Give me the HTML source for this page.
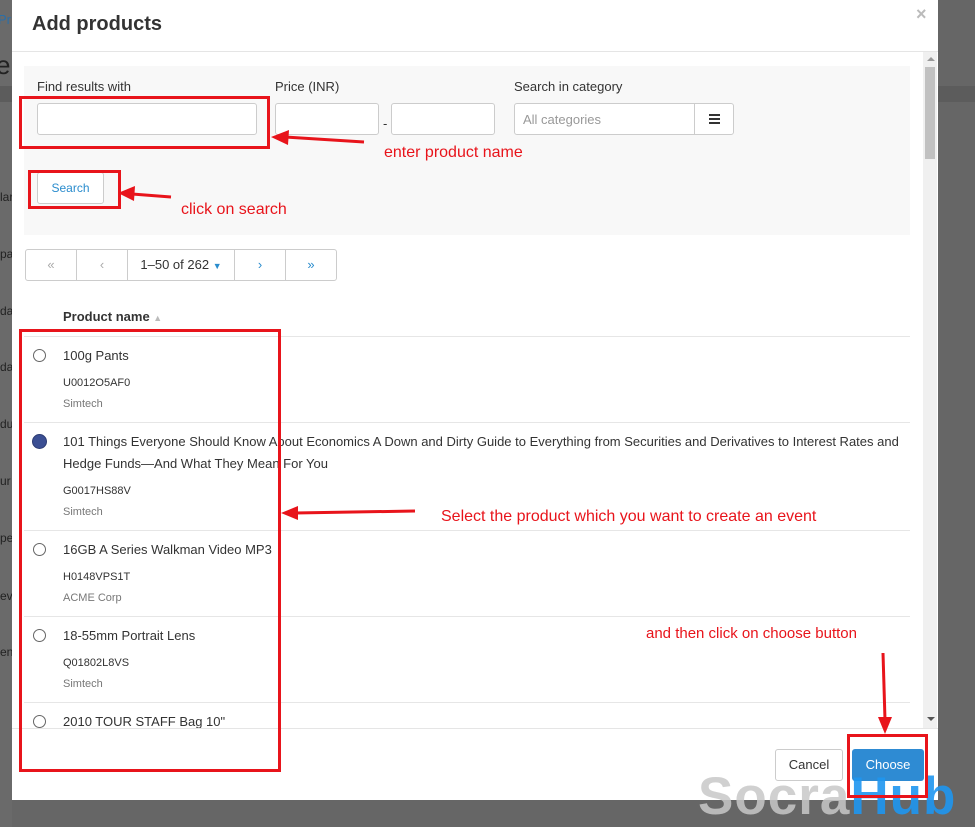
<!DOCTYPE html>
<html><head><meta charset="utf-8"><style>
*{box-sizing:border-box;margin:0;padding:0}
body{width:975px;height:827px;overflow:hidden;background:#666;font-family:"Liberation Sans",sans-serif;position:relative;color:#333}
.a{position:absolute}
.inp{position:absolute;background:#fff;border:1px solid #ccc;border-radius:3px}
.lbl{position:absolute;font-size:13px;color:#333}
.red{position:absolute;border:3px solid #e8141b}
.rt{position:absolute;color:#e8141b;font-size:16px}
.pg{position:absolute;top:249px;height:32px;border:1px solid #ccc;background:#fff;font-size:13px;text-align:center;line-height:30px;color:#2a8ccd}
.row{position:absolute;left:24px;width:886px;border-top:1px solid #e6e6e6}
.nm{position:absolute;left:39px;font-size:13px;color:#333;line-height:22px}
.sku{position:absolute;left:39px;font-size:11px;color:#333}
.co{position:absolute;left:39px;font-size:11px;color:#777}
.rad{position:absolute;left:9px;width:13px;height:13px;border:1px solid #666;border-radius:50%;background:#fff}
</style></head><body>
<div class="a" style="left:0;top:0;width:12px;height:827px;background:#6a6a6a"></div>
<div class="a" style="left:-2px;top:12px;font-size:13px;color:#2a6fa8">Pr</div>
<div class="a" style="left:-4px;top:50px;font-size:26px;color:#222">e</div>
<div class="a" style="left:0;top:86px;width:12px;height:16px;background:#5c5c5c"></div>
<div class="a" style="left:0;top:190px;font-size:12px;color:#222">lar</div>
<div class="a" style="left:0;top:247px;font-size:12px;color:#222">pan</div>
<div class="a" style="left:0;top:304px;font-size:12px;color:#222">da</div>
<div class="a" style="left:0;top:360px;font-size:12px;color:#222">da</div>
<div class="a" style="left:0;top:417px;font-size:12px;color:#222">du</div>
<div class="a" style="left:0;top:474px;font-size:12px;color:#222">ur</div>
<div class="a" style="left:0;top:531px;font-size:12px;color:#222">pe</div>
<div class="a" style="left:0;top:589px;font-size:12px;color:#222">eve</div>
<div class="a" style="left:0;top:645px;font-size:12px;color:#222">en</div>
<div class="a" style="left:938px;top:86px;width:37px;height:16px;background:#5c5c5c"></div>

<div class="a" style="left:12px;top:0;width:926px;height:800px;background:#fff">
 <div class="a" style="left:20px;top:13px;font-size:20px;font-weight:bold;color:#333">Add products</div>
 <div class="a" style="left:904px;top:4px;font-size:18px;color:#bbb;font-weight:bold">×</div>
 <div class="a" style="left:0;top:51px;width:926px;height:1px;background:#e5e5e5"></div>
 <div class="a" style="left:911px;top:52px;width:14px;height:676px;background:#f0f0f0"></div>
 <div class="a" style="left:913px;top:67px;width:10px;height:92px;background:#c1c1c1"></div>
 <div class="a" style="left:915px;top:57px;width:0;height:0;border-left:4px solid transparent;border-right:4px solid transparent;border-bottom:4px solid #999"></div>
 <div class="a" style="left:915px;top:717px;width:0;height:0;border-left:4px solid transparent;border-right:4px solid transparent;border-top:4px solid #555"></div>
 <div class="a" style="left:12px;top:66px;width:886px;height:169px;background:#f8f8f8"></div>
 <div class="a" style="left:0;top:728px;width:926px;height:1px;background:#e5e5e5"></div>
</div>

<div class="lbl" style="left:37px;top:79px">Find results with</div>
<div class="lbl" style="left:275px;top:79px">Price (INR)</div>
<div class="lbl" style="left:514px;top:79px">Search in category</div>
<div class="inp" style="left:37px;top:103px;width:220px;height:32px"></div>
<div class="inp" style="left:275px;top:103px;width:104px;height:32px"></div>
<div class="a" style="left:383px;top:116px;font-size:13px">-</div>
<div class="inp" style="left:391px;top:103px;width:104px;height:32px"></div>
<div class="inp" style="left:514px;top:103px;width:181px;height:32px;border-radius:3px 0 0 3px;font-size:13px;color:#999;padding:8px"> All categories</div>
<div class="inp" style="left:694px;top:103px;width:40px;height:32px;border-radius:0 3px 3px 0">
 <div class="a" style="left:14px;top:10px;width:11px;height:2px;background:#333;box-shadow:0 4px 0 #333,0 8px 0 #333"></div></div>
<div class="inp" style="left:37px;top:172px;width:67px;height:32px;font-size:12px;color:#2a8ccd;text-align:center;line-height:30px">Search</div>

<div class="pg" style="left:25px;width:52px;border-radius:3px 0 0 3px;color:#aaa">«</div>
<div class="pg" style="left:76px;width:52px;color:#aaa">‹</div>
<div class="pg" style="left:127px;width:108px;color:#333">1–50 of 262 <span style="color:#2a8ccd;font-size:9px">▼</span></div>
<div class="pg" style="left:234px;width:52px">›</div>
<div class="pg" style="left:285px;width:52px;border-radius:0 3px 3px 0">»</div>

<div class="a" style="left:63px;top:309px;font-size:13px;font-weight:bold">Product name <span style="color:#bbb;font-size:9px">▲</span></div>

<div class="row" style="top:336px;height:86px">
 <div class="rad" style="top:12px"></div>
 <div class="nm" style="top:8px">100g Pants</div>
 <div class="sku" style="top:40px">U0012O5AF0</div>
 <div class="co" style="top:61px">Simtech</div>
</div>
<div class="row" style="top:422px;height:108px">
 <div class="rad" style="top:11px;width:15px;height:15px;left:8px;background:#3b4f93;border-color:#2d3c73"></div>
 <div class="nm" style="top:8px;width:850px">101 Things Everyone Should Know About Economics A Down and Dirty Guide to Everything from Securities and Derivatives to Interest Rates and Hedge Funds—And What They Mean For You</div>
 <div class="sku" style="top:62px">G0017HS88V</div>
 <div class="co" style="top:83px">Simtech</div>
</div>
<div class="row" style="top:530px;height:86px">
 <div class="rad" style="top:12px"></div>
 <div class="nm" style="top:8px">16GB A Series Walkman Video MP3</div>
 <div class="sku" style="top:40px">H0148VPS1T</div>
 <div class="co" style="top:61px">ACME Corp</div>
</div>
<div class="row" style="top:616px;height:86px">
 <div class="rad" style="top:12px"></div>
 <div class="nm" style="top:8px">18-55mm Portrait Lens</div>
 <div class="sku" style="top:40px">Q01802L8VS</div>
 <div class="co" style="top:61px">Simtech</div>
</div>
<div class="row" style="top:702px;height:26px;overflow:hidden">
 <div class="rad" style="top:12px"></div>
 <div class="nm" style="top:8px">2010 TOUR STAFF Bag 10"</div>
</div>

<div class="inp" style="left:775px;top:749px;width:68px;height:32px;font-size:13px;text-align:center;line-height:30px">Cancel</div>
<div class="a" style="left:852px;top:749px;width:72px;height:32px;background:#2e8bd3;border-radius:3px;color:#fff;font-size:13px;text-align:center;line-height:32px">Choose</div>

<div class="a" style="left:698px;top:767px;font-size:53px;line-height:60px;font-weight:bold;letter-spacing:1px;color:rgba(200,200,200,.85)">Socra<span style="color:rgba(30,150,240,.9)">Hub</span></div>

<div class="red" style="left:19px;top:96px;width:251px;height:53px"></div>
<div class="red" style="left:28px;top:170px;width:93px;height:39px"></div>
<div class="red" style="left:19px;top:329px;width:262px;height:443px"></div>
<div class="red" style="left:847px;top:734px;width:81px;height:64px"></div>
<div class="rt" style="left:384px;top:144px">enter product name</div>
<div class="rt" style="left:181px;top:201px">click on search</div>
<div class="rt" style="left:441px;top:508px">Select the product which you want to create an event</div>
<div class="rt" style="left:646px;top:625px;font-size:15px">and then click on choose button</div>
<svg class="a" style="left:0;top:0" width="975" height="827">
<g stroke="#e8141b" stroke-width="3" fill="#e8141b">
<line x1="364" y1="142" x2="285" y2="137"/><polygon points="271,137 289,130 288,145" stroke="none"/>
<line x1="171" y1="197" x2="132" y2="194"/><polygon points="118,193 135,186 134,201" stroke="none"/>
<line x1="415" y1="511" x2="295" y2="513"/><polygon points="281,513 298,506 298,520" stroke="none"/>
<line x1="883" y1="653" x2="885" y2="720"/><polygon points="885,734 878,717 892,717" stroke="none"/>
</g></svg>
</body></html>
